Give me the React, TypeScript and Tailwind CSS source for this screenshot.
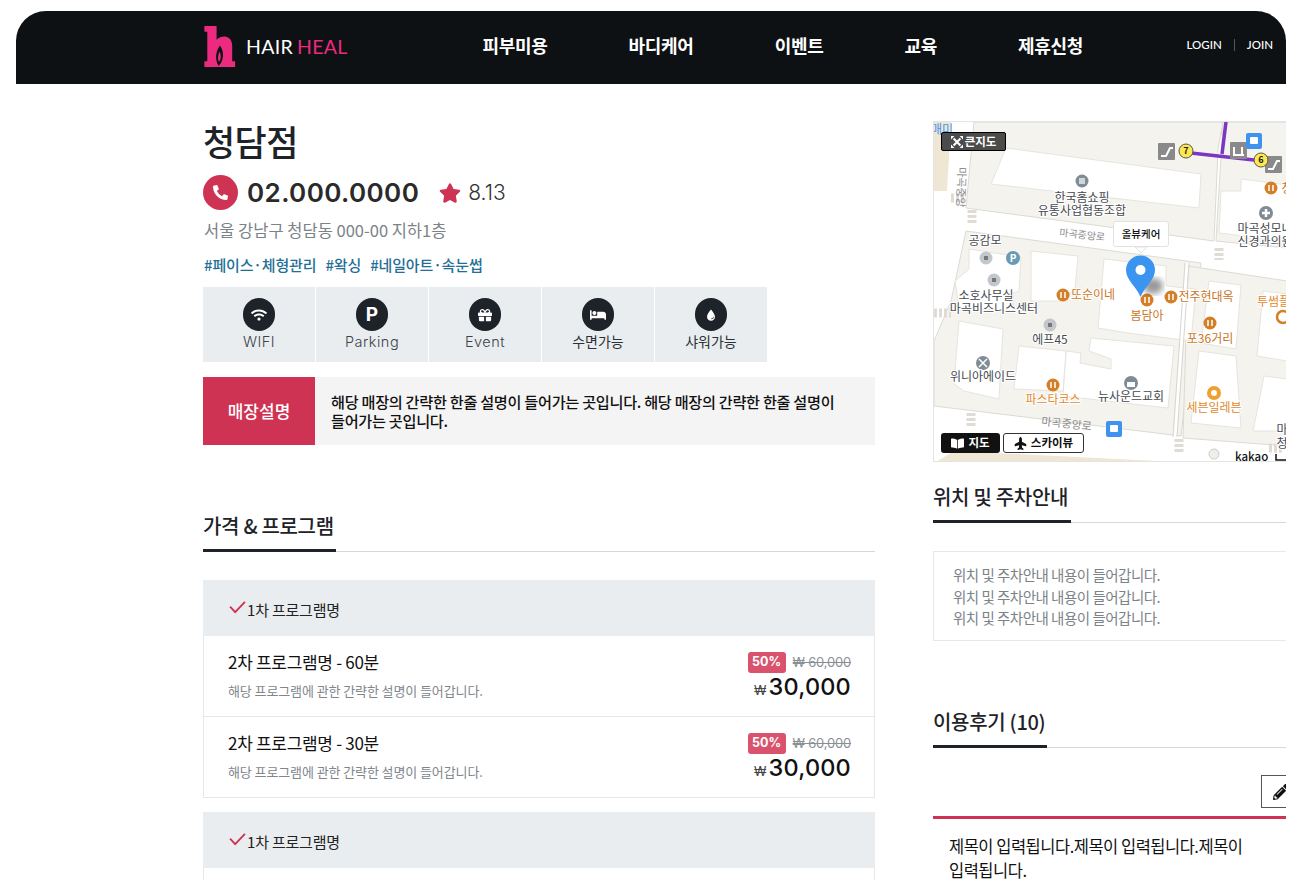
import { FaBed, FaBookOpen, FaGift, FaPencilAlt, FaPhoneAlt, FaPlane, FaStar, FaWifi } from "react-icons/fa"
import { IoWater } from "react-icons/io5"
import type { ReactNode } from "react"

const BLOCKS = [
  "973,121 1222,121 1217,148 1213,240 965,207",
  "1222,121 1286,121 1286,247 1215,240",
  "965,230 1200,262 1180,435 933,405 933,340 950,300",
  "1187,265 1286,280 1286,445 1182,437",
]

const BUILDINGS = [
  "1005,147 1200,173 1198,207 990,183",
  "1240,178 1286,184 1286,240 1218,232 1220,190 1240,190",
  "968,248 1020,256 1018,290 1012,292 1012,310 958,306 954,280 968,268",
  "1030,250 1077,255 1074,288 1060,300 1030,300",
  "1103,258 1165,265 1165,285 1195,288 1190,340 1127,332 1097,327",
  "1090,337 1173,345 1167,407 1062,395 1065,350 1080,352 1079,362 1110,368 1110,358 1088,350",
  "958,320 1002,328 998,398 963,390 953,383",
  "1018,345 1065,350 1062,390 1013,388",
  "1198,350 1235,355 1240,427 1190,422",
  "1263,375 1286,378 1286,430 1252,430",
  "1208,280 1240,284 1235,348 1200,342",
  "1262,290 1286,293 1286,360 1256,355",
]

const LABELS: { x: number; y: number; t: string; c?: string }[] = [
  { x: 1081, y: 201, t: "한국홈쇼핑" },
  { x: 1081, y: 214, t: "유통사업협동조합" },
  { x: 1264, y: 232, t: "마곡성모내" },
  { x: 1264, y: 245, t: "신경과의원" },
  { x: 984, y: 244, t: "공감모" },
  { x: 985, y: 299, t: "소호사무실" },
  { x: 993, y: 312, t: "마곡비즈니스센터" },
  { x: 1049, y: 343, t: "에프45" },
  { x: 982, y: 380, t: "위니아에이드" },
  { x: 1130, y: 400, t: "뉴사운드교회" },
  { x: 1092, y: 298, t: "또순이네", c: "#c9761f" },
  { x: 1205, y: 300, t: "전주현대옥", c: "#c9761f" },
  { x: 1146, y: 319, t: "봄담아", c: "#c9761f" },
  { x: 1209, y: 342, t: "포36거리", c: "#c9761f" },
  { x: 1052, y: 403, t: "파스타코스", c: "#e08a2c" },
  { x: 1213, y: 411, t: "세븐일레븐", c: "#e08a2c" },
  { x: 1278, y: 305, t: "투썸플레", c: "#e08a2c" },
  { x: 1286, y: 192, t: "청", c: "#c9761f" },
  { x: 1281, y: 433, t: "마" },
  { x: 1281, y: 447, t: "청" },
]

const FOOD = [
  [1062, 294],
  [1170, 296],
  [1146, 299],
  [1209, 322],
  [1052, 384],
  [1270, 187],
]

// 횡단보도 [x1, y1, x2, y2]
const CROSSWALKS = [
  [950, 197, 965, 197],
  [971, 209, 971, 223],
  [1218, 247, 1218, 259],
  [933, 312, 950, 312],
  [970, 412, 970, 427],
  [1178, 438, 1178, 452],
  [1268, 447, 1282, 447],
]

const MapView = () => (
  <div className="relative h-[341px] w-full overflow-hidden border border-[#e4e4e4]">
    <svg viewBox="933 121 353 341" className="absolute top-0 left-0 h-[341px] w-[353px] bg-white font-['Noto_Sans_CJK_KR',sans-serif]">
      <defs>
        <filter id="pin-shadow">
          <feGaussianBlur stdDeviation="3" />
        </filter>
      </defs>
      <polygon points="933,121 950,121 946,190 933,190" fill="#efe6d3" />
      <polygon points="1130,121 1286,121 1286,143" fill="#fbe28a" />
      <polygon points="953,450 1197,462 933,462" fill="#efe6d3" />
      {BLOCKS.map((p) => (
        <polygon key={p} points={p} fill="#f5f3ee" stroke="#dcdad3" />
      ))}
      {BUILDINGS.map((p) => (
        <polygon key={p} points={p} fill="#ffffff" stroke="#e6e4dd" />
      ))}
      {CROSSWALKS.map(([x1, y1, x2, y2]) => (
        <line key={`${x1}-${y1}`} x1={x1} y1={y1} x2={x2} y2={y2} stroke="#dedcd5" strokeWidth="9" strokeDasharray="3 2" />
      ))}
      <line x1="1186" y1="262" x2="1174" y2="436" stroke="#ffffff" strokeWidth="3" />
      <line x1="1184" y1="262" x2="1172" y2="436" stroke="#d8d6cf" strokeWidth="1" />
      <line x1="1188" y1="262" x2="1176" y2="436" stroke="#d8d6cf" strokeWidth="1" />
      <circle cx="1213" cy="453" r="5" fill="#f0eee8" stroke="#cfcdc6" />
      <path d="M1225 121 L1221 153 M1190 152 L1262 160" stroke="#7b36c4" strokeWidth="3.5" fill="none" />
      <text x="930" y="133" fontSize="12" fill="#3f93ee">매미</text>
      <text transform="translate(957 166) rotate(92)" fontSize="11" fill="#8b8b8b">마곡중앙</text>
      <text transform="translate(1058 235) rotate(6)" fontSize="10" fill="#8b8b8b">마곡중앙로</text>
      <text transform="translate(1040 424) rotate(6)" fontSize="11" fill="#8b8b8b">마곡중앙로</text>
      {/* 지하철 출구 */}
      <rect x="1157" y="142" width="17" height="17" rx="1" fill="#8a8a8a" />
      <path d="M1160 155 L1165 155 L1169 147 L1172 147" stroke="#fff" strokeWidth="2" fill="none" />
      <circle cx="1185" cy="150" r="7" fill="#fbe94f" stroke="#555" />
      <text x="1185" y="153" fontSize="9" fontWeight="700" textAnchor="middle" fill="#222">7</text>
      <rect x="1229" y="141" width="17" height="17" rx="1" fill="#8a8a8a" />
      <path d="M1233 146 V153 M1241 146 V153 M1232 154 H1243" stroke="#fff" strokeWidth="2" />
      <rect x="1245" y="132" width="16" height="16" rx="2" fill="#3f93ee" />
      <rect x="1249" y="136" width="8" height="7" rx="1" fill="#fff" />
      <rect x="1264" y="155" width="17" height="17" rx="1" fill="#8a8a8a" />
      <path d="M1267 168 L1272 168 L1276 160 L1279 160" stroke="#fff" strokeWidth="2" fill="none" />
      <circle cx="1260" cy="159" r="7" fill="#fbe94f" stroke="#555" />
      <text x="1260" y="162" fontSize="9" fontWeight="700" textAnchor="middle" fill="#222">6</text>
      <rect x="1105" y="420" width="16" height="16" rx="2" fill="#3f93ee" />
      <rect x="1109" y="424" width="8" height="7" rx="1" fill="#fff" />
      {/* POI */}
      <circle cx="1081" cy="180" r="6.5" fill="#7f8c95" />
      <rect x="1078" y="177" width="6" height="6" fill="#cfd5d9" />
      <circle cx="1265" cy="212" r="7" fill="#7f8c95" />
      <path d="M1261 212 H1269 M1265 208 V216" stroke="#fff" strokeWidth="2.5" />
      <circle cx="985" cy="257" r="6.5" fill="#c3c7cb" />
      <rect x="983" y="255" width="4" height="4" fill="#777" />
      <circle cx="1012" cy="257" r="7" fill="#6a9bb5" />
      <text x="1012" y="261" fontSize="10" fontWeight="700" textAnchor="middle" fill="#fff">P</text>
      <circle cx="993" cy="279" r="6.5" fill="#c3c7cb" />
      <rect x="991" y="277" width="4" height="4" fill="#777" />
      <circle cx="1049" cy="324" r="6.5" fill="#c3c7cb" />
      <rect x="1047" y="322" width="4" height="4" fill="#777" />
      <circle cx="982" cy="362" r="7" fill="#7f8c95" />
      <path d="M978 358 L986 366 M986 358 L978 366" stroke="#fff" strokeWidth="1.5" />
      <circle cx="1130" cy="382" r="7" fill="#7f8c95" />
      <rect x="1126" y="381" width="8" height="5" fill="#fff" />
      <circle cx="1213" cy="392" r="7" fill="#f0a030" />
      <circle cx="1213" cy="392" r="3" fill="#fff" />
      {FOOD.map(([x, y]) => (
        <g key={`${x}-${y}`}>
          <circle cx={x} cy={y} r="6.5" fill="#d27f27" />
          <path d={`M${x - 2} ${y - 3} V${y + 3} M${x + 2} ${y - 3} V${y + 3}`} stroke="#fff" strokeWidth="1.5" />
        </g>
      ))}
      <circle cx="1282" cy="316" r="6" fill="none" stroke="#d27f27" strokeWidth="2.5" />
      {LABELS.map((l) => (
        <text
          key={l.t}
          x={l.x}
          y={l.y}
          fontSize="12"
          textAnchor="middle"
          fill={l.c ?? "#444a50"}
          stroke="#fff"
          strokeWidth="2"
          paintOrder="stroke"
        >
          {l.t}
        </text>
      ))}
      {/* 마커 */}
      <ellipse cx="1152" cy="285" rx="10" ry="8" fill="#333" opacity="0.5" filter="url(#pin-shadow)" />
      <path d="M1139.500 296 C1135 285 1125 279 1125 269 A14.500 14.500 0 0 1 1154 269 C1154 279 1144 285 1139.500 296 Z" fill="#3b95f0" />
      <circle cx="1139.500" cy="269" r="5" fill="#fff" />
      <polygon points="1134,246 1140,252 1146,246" fill="#fff" stroke="#e2e2e2" />
      <text x="1234" y="460" fontSize="11.500" fontWeight="500" fill="#111">kakao</text>
      <path d="M1275 453 V459 H1286" stroke="#111" strokeWidth="1.5" fill="none" />
    </svg>
    <div className="absolute top-[99px] left-[179px] flex h-[26px] w-[56px] items-center justify-center rounded-[3px] border border-[#e2e2e2] bg-white text-[10.5px] font-medium text-[#111]">
      올뷰케어
    </div>
    <div className="absolute top-[10px] left-[7px] flex h-[19px] w-[65px] items-center justify-center gap-[2px] rounded-[2px] border border-black bg-[#4b4b4b] text-[11.5px] font-bold text-white">
      <svg viewBox="0 0 14 14" className="size-[12px]" fill="#fff" stroke="#fff" strokeWidth="2.4">
        <path d="M3 3 L11 11 M11 3 L3 11" fill="none" />
        <path d="M0 0 H4 L0 4 Z M14 0 V4 L10 0 Z M0 14 V10 L4 14 Z M14 14 H10 L14 10 Z" stroke="none" />
      </svg>
      큰지도
    </div>
    <div className="absolute bottom-[8px] left-[7px] flex gap-[3px] text-[11.5px] font-bold">
      <div className="flex h-[20px] w-[59px] items-center justify-center gap-1 rounded-[3px] bg-[#111] text-white">
        <FaBookOpen className="size-[13px]" />
        지도
      </div>
      <div className="flex h-[20px] w-[81px] items-center justify-center gap-1 rounded-[3px] border border-[#333] bg-white text-[#111]">
        <FaPlane className="size-[13px] -rotate-90" />
        스카이뷰
      </div>
    </div>
  </div>
)

const Amenity = ({ icon, label, latin }: { icon: ReactNode; label: string; latin?: boolean }) => (
  <div className="flex h-[75px] flex-col items-center bg-[#e9edf0] pt-[11px]">
    <div className="flex h-[33px] w-[32px] items-center justify-center rounded-full bg-[#1e2329] text-white">{icon}</div>
    <span className={latin ? "text-[14.5px] leading-[22px] font-light tracking-[0.5px] text-[#3d4348]" : "text-[14px] leading-[22px] text-[#2c3136]"}>{label}</span>
  </div>
)

const SectionTitle = ({ title, width }: { title: string; width: string }) => (
  <div className="border-b border-[#d8d8d8]">
    <h2 className={`-mb-[1px] border-b-[3px] border-[#1e2329] pb-[8px] text-[20px] leading-[30px] font-medium tracking-[-0.3px] whitespace-nowrap text-[#1e2329] ${width}`}>{title}</h2>
  </div>
)

const Program = ({ name }: { name: string }) => (
  <div className="flex h-[81px] items-start justify-between border-x border-b border-[#e6e6e6] pt-[14px] pr-[23px] pl-[24px]">
    <div>
      <div className="text-[17px] leading-[24px] tracking-[-0.3px] text-[#111]">{name}</div>
      <div className="mt-[8px] text-[13px] leading-[18px] tracking-[-0.1px] text-[#80868c]">해당 프로그램에 관한 간략한 설명이 들어갑니다.</div>
    </div>
    <div className="mt-[2px] flex flex-col items-end">
      <div className="flex items-center gap-[7px]">
        <span className="flex h-[21px] w-[38px] items-center justify-center rounded-[3px] bg-[#d9536f] font-['Inter',sans-serif] text-[12.5px] font-bold text-white">50%</span>
        <span className="font-['Inter',sans-serif] text-[13px] tracking-[-0.2px] text-[#8a8f94] line-through">₩ 60,000</span>
      </div>
      <div className="mt-[1px] flex items-baseline gap-[2px] font-['Inter',sans-serif] leading-[26px] font-medium text-[#111]">
        <span className="text-[13px] font-normal text-[#444]">₩</span>
        <span className="text-[23.5px] tracking-[0.2px]">30,000</span>
      </div>
    </div>
  </div>
)

const ProgramHeader = () => (
  <div className="flex h-[56px] items-center bg-[#e9edf0] pt-[5px] pl-[25px] text-[15px] tracking-[-0.2px] text-[#222]">
    <svg viewBox="0 0 18 14" className="mb-[6px] h-[13px] w-[19px]" fill="none" stroke="#cf3353" strokeWidth="2">
      <path d="M1 6 L6.500 12 L17 1" />
    </svg>
    <span>1차 프로그램명</span>
  </div>
)

const App = () => {
  return (
    <div className="h-[880px] overflow-hidden bg-white pt-[11px] pr-3 pl-4 font-['Noto_Sans_CJK_KR',sans-serif]">
      <div className="h-[869px] overflow-hidden rounded-t-[30px]">
        <header className="flex h-[73px] items-center bg-[#0e1114] pl-[188px] text-white">
          <svg viewBox="0 0 32 42" className="mb-[2px] h-[41px] w-[32px]">
            <path
              d="M0 0 H12.500 V14 C15 11.500 19 10.500 22 11 C27 12 28.500 16 28.500 21 V36 H31.500 V42 H0 V36 H3 V6 H0 Z"
              fill="#ec2a7f"
            />
            <path d="M16 20 C11.500 26 10.500 34 14.500 41 C19.500 36 21 27 16 20 Z" fill="#0e1114" />
            <path d="M15.700 26 C13.500 30 13.500 34 15 37 C17 34 17.500 30 15.700 26 Z" fill="#ec2a7f" />
          </svg>
          <div className="mb-[1px] ml-[10px] font-['Lato',sans-serif] text-[19.5px] font-normal tracking-[0.3px]">
            HAIR<span className="ml-[4px] text-[#ec2a7f]">HEAL</span>
          </div>
          <nav className="mb-[4px] ml-[135px] flex gap-[81px] text-[18px] font-bold tracking-[-0.3px]">
            <span>피부미용</span>
            <span>바디케어</span>
            <span>이벤트</span>
            <span>교육</span>
            <span>제휴신청</span>
          </nav>
          <div className="mb-[6px] ml-auto flex items-center pr-[13px] font-['Lato',sans-serif] text-[11.5px] font-medium">
            <span>LOGIN</span>
            <span className="mx-3 h-[12px] w-px bg-[#555]" />
            <span>JOIN</span>
          </div>
        </header>

        <main className="flex pt-[36px] pl-[187px]">
          <section className="w-[672px] shrink-0">
            <h1 className="text-[35px] leading-[42px] font-medium tracking-[-0.6px] text-[#1e2329]">청담점</h1>
            <div className="mt-[11px] flex items-center">
              <div className="flex size-[35px] items-center justify-center rounded-full bg-[#cf3353] text-white">
                <FaPhoneAlt className="size-[15px]" />
              </div>
              <span className="ml-[9px] font-['Inter',sans-serif] text-[26px] font-semibold tracking-[0.4px] text-[#2a2a2a]">02.000.0000</span>
              <FaStar className="ml-[20px] size-[22px] text-[#cf3353]" />
              <span className="ml-[7px] font-['Inter',sans-serif] text-[21px] font-light text-[#333]">8.13</span>
            </div>
            <p className="mt-[6px] pl-px text-[16.5px] leading-[24px] text-[#7b8288]">서울 강남구 청담동 000-00 지하1층</p>
            <div className="mt-[12px] flex gap-[9px] pl-px text-[15px] leading-[22px] font-medium tracking-[-0.15px] text-[#1f6f96]">
              <span>#페이스·체형관리</span>
              <span>#왁싱</span>
              <span>#네일아트·속눈썹</span>
            </div>
            <div className="mt-[11px] grid w-[564px] grid-cols-5 gap-x-px font-['Inter','Noto_Sans_CJK_KR',sans-serif]">
              <Amenity icon={<FaWifi className="size-[16px]" />} label="WIFI" latin />
              <Amenity icon={<span className="text-[19px] leading-none font-bold">P</span>} label="Parking" latin />
              <Amenity icon={<FaGift className="size-[14px]" />} label="Event" latin />
              <Amenity icon={<FaBed className="size-[16px]" />} label="수면가능" />
              <Amenity icon={<IoWater className="size-[14px]" />} label="샤워가능" />
            </div>
            <div className="mt-[15px] flex h-[68px]">
              <div className="flex w-[112px] shrink-0 items-center justify-center bg-[#cf3353] text-[17px] font-medium text-white">매장설명</div>
              <p className="flex flex-1 items-center bg-[#f4f4f4] pr-[36px] pl-[16px] text-[15.2px] leading-[19px] font-medium tracking-[-0.3px] text-[#111]">
                해당 매장의 간략한 한줄 설명이 들어가는 곳입니다. 해당 매장의 간략한 한줄 설명이 들어가는 곳입니다.
              </p>
            </div>

            <div className="mt-[66px]">
              <SectionTitle title="가격 & 프로그램" width="w-[133px]" />
            </div>

            <div className="mt-[28px]">
              <ProgramHeader />
              <Program name="2차 프로그램명 - 60분" />
              <Program name="2차 프로그램명 - 30분" />
            </div>
            <div className="mt-[14px]">
              <ProgramHeader />
              <div className="h-[20px] border-x border-[#e6e6e6]" />
            </div>
          </section>

          <aside className="ml-[58px] w-[400px] shrink-0">
            <div className="mt-[1px]">
              <MapView />
            </div>
            <div className="mt-[20px]">
              <SectionTitle title="위치 및 주차안내" width="w-[138px]" />
            </div>
            <div className="mt-[28px] h-[90px] border border-[#e8e8e8] pt-[12px] pl-[19px] text-[14.5px] leading-[21.5px] tracking-[-0.5px] text-[#7b8288]">
              <p>위치 및 주차안내 내용이 들어갑니다.</p>
              <p>위치 및 주차안내 내용이 들어갑니다.</p>
              <p>위치 및 주차안내 내용이 들어갑니다.</p>
            </div>
            <div className="mt-[66px]">
              <SectionTitle title="이용후기 (10)" width="w-[114px]" />
            </div>
            <div className="mt-[27px] flex pl-[328px]">
              <div className="flex h-[33px] w-[44px] items-center border border-[#555] pl-[11px] text-[#111]">
                <FaPencilAlt className="size-[16px]" />
              </div>
            </div>
            <div className="mt-[8px] border-t-[3px] border-[#cf3353] pt-[15px] pl-[16px] text-[16.5px] leading-[24px] tracking-[-0.5px] text-[#111]">
              <p className="w-[300px]">제목이 입력됩니다.제목이 입력됩니다.제목이 입력됩니다.</p>
            </div>
          </aside>
        </main>
      </div>
    </div>
  )
}

export default App
